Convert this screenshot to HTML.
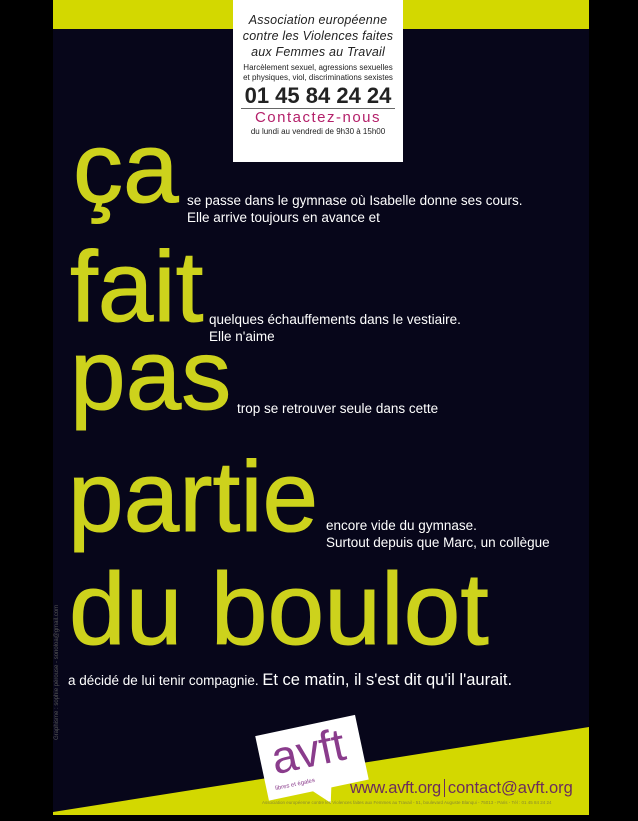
<!DOCTYPE html>
<html><head><meta charset="utf-8"><style>
body{margin:0;width:638px;height:821px;background:#000;position:relative;overflow:hidden;font-family:"Liberation Sans",sans-serif}
.p{position:absolute;left:53px;top:0;width:536px;height:815px;background:#07061a;overflow:hidden}
.big{position:absolute;color:#cdd21c;font-size:100px;line-height:1;white-space:nowrap;-webkit-text-stroke:1px #cdd21c}
.s{position:absolute;color:#fff;font-size:13.5px;line-height:17px;white-space:nowrap}
</style></head><body>
<div class="p">
<div style="position:absolute;left:0;top:0;width:536px;height:29px;background:#d3d800"></div>
<div style="position:absolute;left:180px;top:0;width:170px;height:162px;background:#fff;text-align:center;color:#222">
<div style="font-style:italic;font-size:12.5px;line-height:16px;margin-top:12px;letter-spacing:.2px">Association européenne<br>contre les Violences faites<br>aux Femmes au Travail</div>
<div style="font-size:8px;line-height:10px;margin-top:3px">Harcèlement sexuel, agressions sexuelles<br>et physiques, viol, discriminations sexistes</div>
<div style="font-size:22px;font-weight:bold;line-height:24px;margin-top:1px;border-bottom:1px solid #666;margin-left:8px;margin-right:8px">01 45 84 24 24</div>
<div style="font-size:15px;color:#b4206a;letter-spacing:1.5px;line-height:18px">Contactez-nous</div>
<div style="font-size:8px;line-height:10px">du lundi au vendredi de 9h30 à 15h00</div>
</div>
<div class="big" style="left:20px;top:118px">ça</div>
<div class="s" style="left:134px;top:192px">se passe dans le gymnase où Isabelle donne ses cours.<br>Elle arrive toujours en avance et</div>
<div class="big" style="left:17px;top:237px">fait</div>
<div class="s" style="left:156px;top:311px">quelques échauffements dans le vestiaire.<br>Elle n'aime</div>
<div class="big" style="left:17px;top:325px">pas</div>
<div class="s" style="left:184px;top:400px">trop se retrouver seule dans cette</div>
<div class="big" style="left:15px;top:447px">partie</div>
<div class="s" style="left:273px;top:517px">encore vide du gymnase.<br>Surtout depuis que Marc, un collègue</div>
<div class="big" style="left:16px;top:558px;font-size:102px">du boulot</div>
<div class="s" style="left:15px;top:672px">a décidé de lui tenir compagnie. <span style="font-size:16.5px">Et ce matin, il s'est dit qu'il l'aurait.</span></div>
<svg style="position:absolute;left:0;top:0" width="536" height="815">
<polygon points="0,812 536,727 536,815 0,815" fill="#d3d800"/>
<g transform="rotate(-12 258 758)">
<rect x="208" y="725" width="102" height="66" fill="#fff"/>
<polygon points="252,790 272,790 268,806" fill="#fff"/>
</g>
<text x="0" y="0" font-size="6" fill="#555" transform="translate(5,740) rotate(-90)">Graphisme : sophie pérouse - sonoloa@gmail.com</text>
</svg>
<div style="position:absolute;left:218px;top:728px;transform:rotate(-12deg);color:#8a3c8c;font-size:46px;line-height:46px">avft</div>
<div style="position:absolute;left:222px;top:782px;transform:rotate(-12deg);color:#8a3c8c;font-size:6px">libres et égales</div>
<div style="position:absolute;left:297px;top:779px;color:#6b2d5c;font-size:16.5px;white-space:nowrap"><span style="letter-spacing:-.3px">www.avft.org</span><span style="border-left:1px solid #6b2d5c;margin:0 3px"></span><span>contact@avft.org</span></div>
<div style="position:absolute;left:209px;top:800px;color:#8a8a30;font-size:4.5px;white-space:nowrap">Association européenne contre les Violences faites aux Femmes au Travail - 51, boulevard Auguste Blanqui - 75013 - Paris - Tél : 01 45 84 24 24</div>
</div>
</body></html>
